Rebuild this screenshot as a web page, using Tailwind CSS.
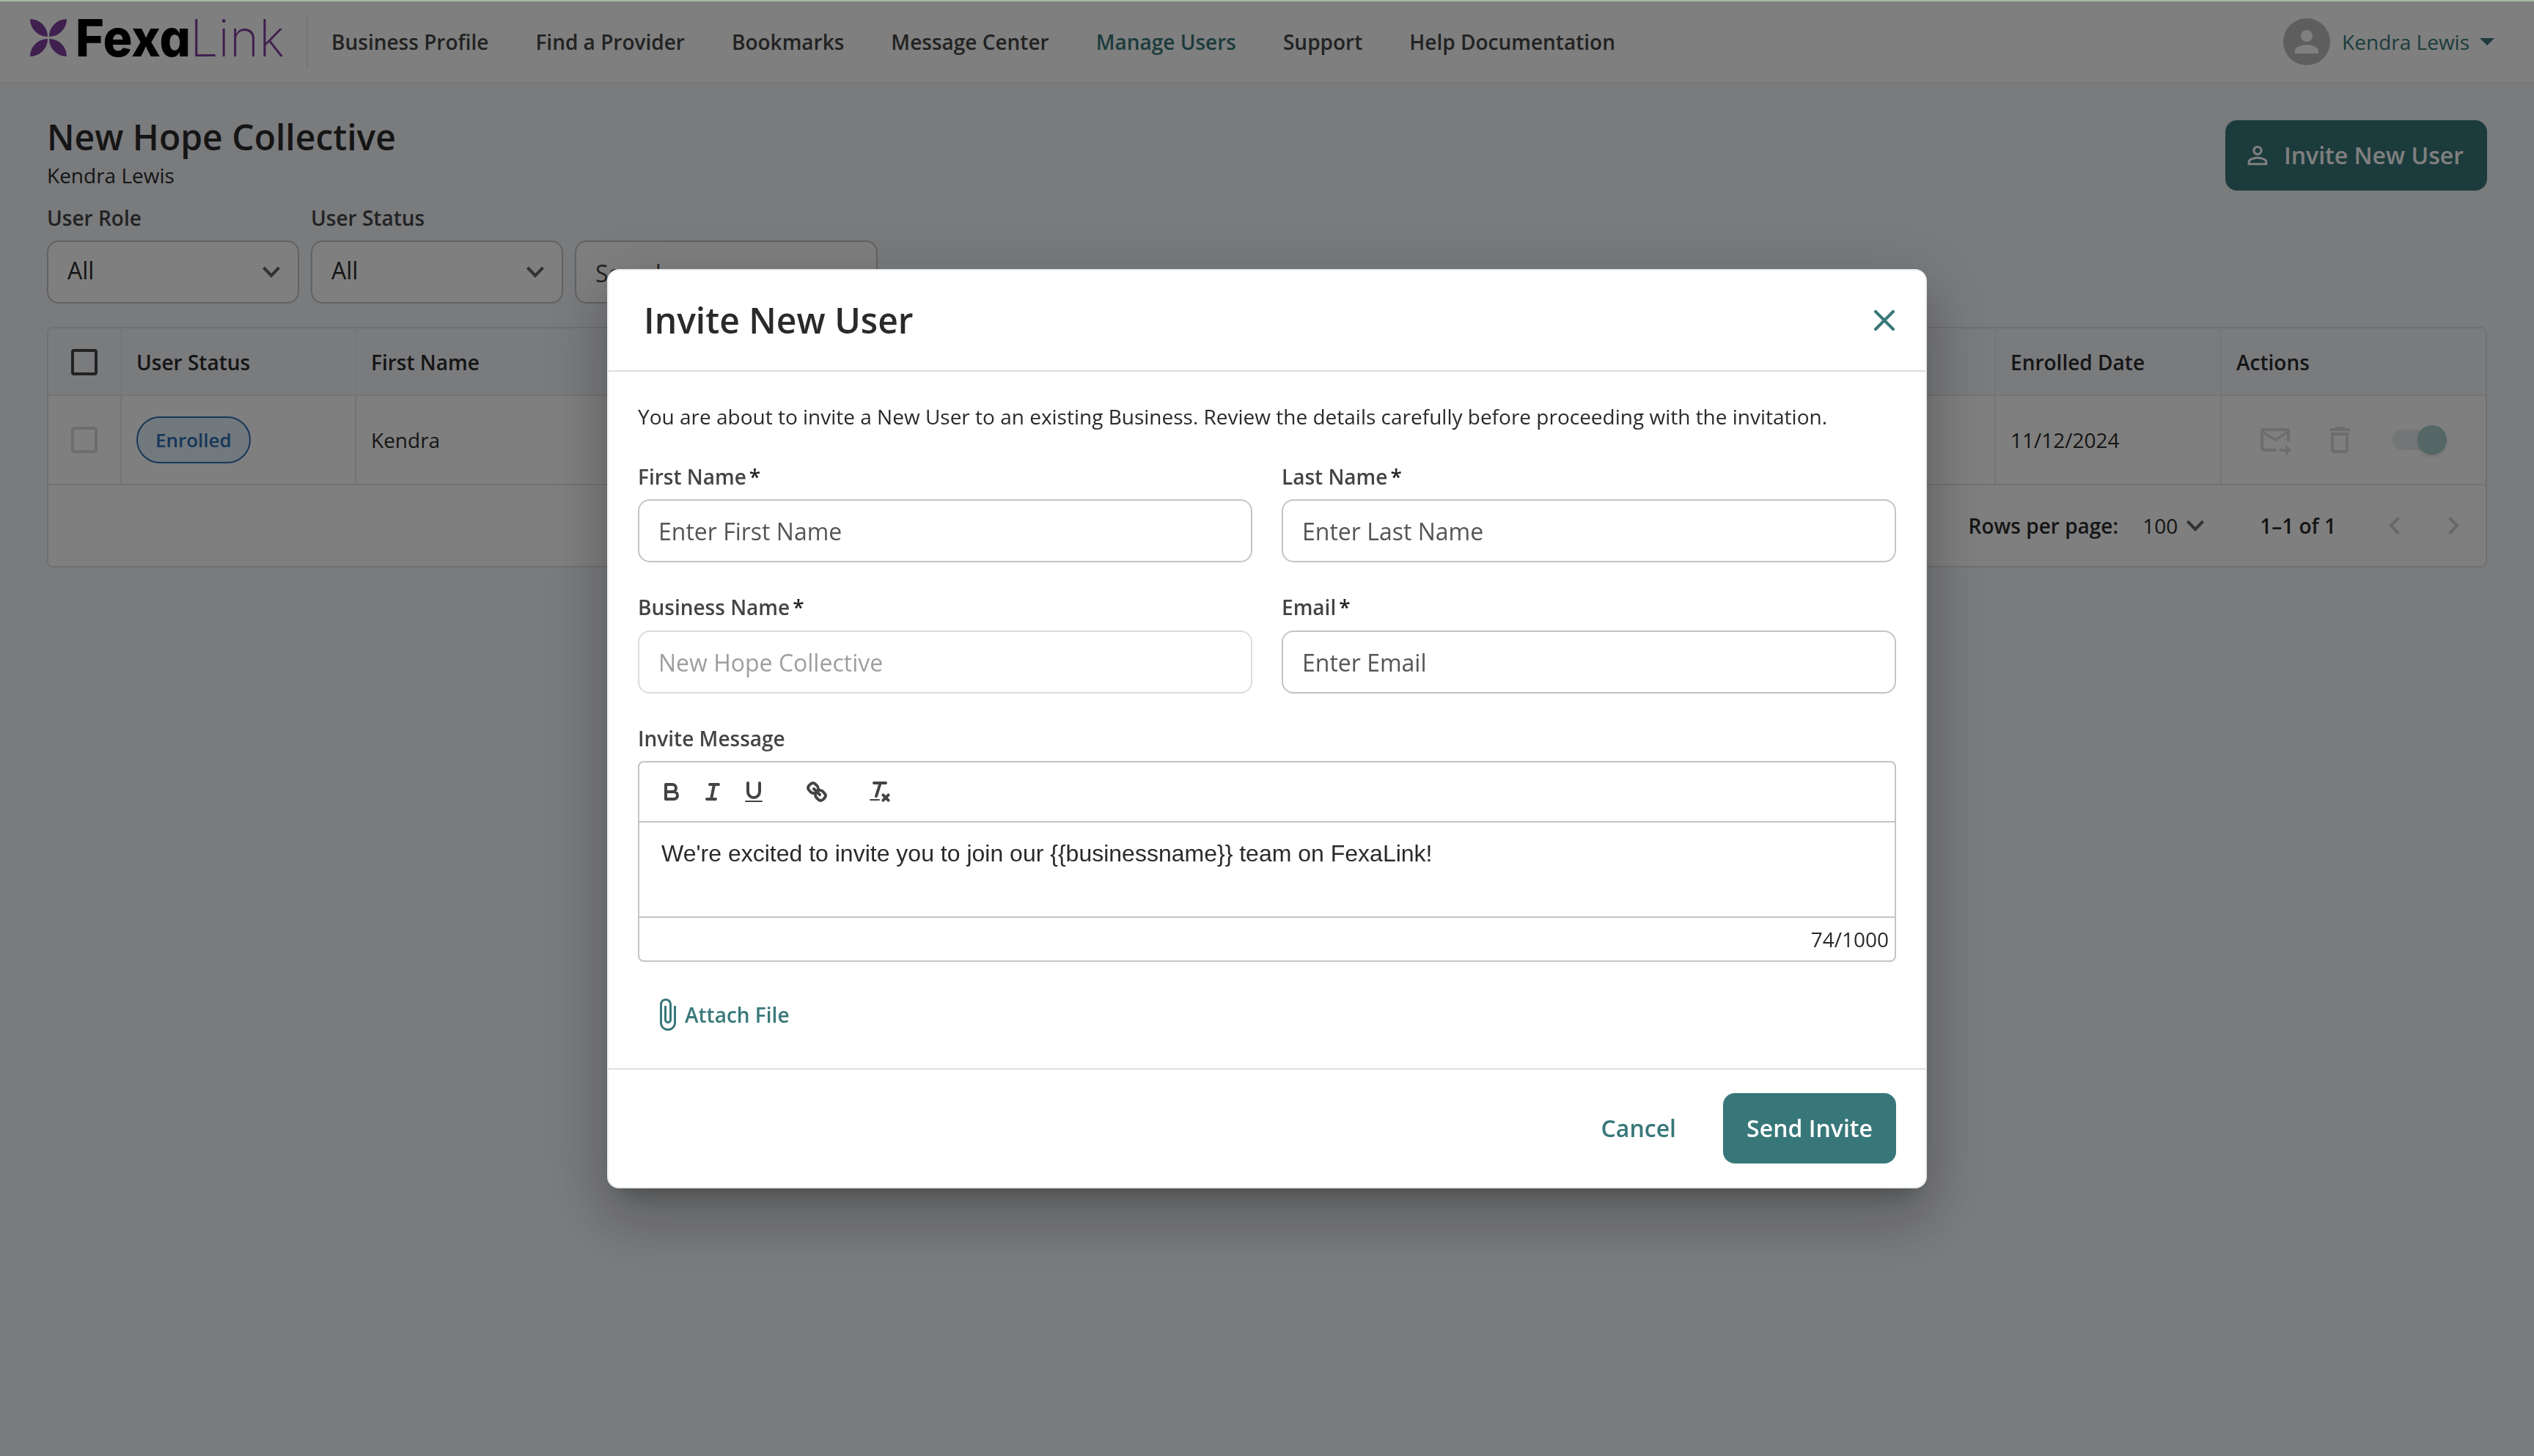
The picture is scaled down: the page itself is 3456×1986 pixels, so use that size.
<!DOCTYPE html>
<html lang="en">
  <head>
    <meta charset="UTF-8" />
    <meta name="viewport" content="width=device-width, initial-scale=1.0" />
    <title>FexaLink - Manage Users</title>
    <script src="https://cdn.jsdelivr.net/npm/@tailwindcss/browser@4"></script>
  </head>
  <body class="h-[1986px] overflow-hidden bg-[#f5f7fa] font-['Open_Sans',sans-serif] text-[28px] leading-[38px] text-[#2a2a2a]">
    <div class="h-0.5 bg-[#a5b9a5]"></div>

    <header class="flex h-28 items-center border-b-2 border-[#eceef1] bg-white pr-[54px] pl-10">
      <svg class="mb-2.5 h-20 w-[350px] overflow-visible" viewBox="0 0 350 80">
        <g fill="#80409f">
          <path d="M1 14A24 24 0 0 1 25 38A24 24 0 0 1 1 14Z" />
          <path d="M51 14A24 24 0 0 0 27 38A24 24 0 0 0 51 14Z" />
          <path d="M1 65A24 24 0 0 0 25 41A24 24 0 0 0 1 65Z" />
          <path d="M51 65A24 24 0 0 1 27 41A24 24 0 0 1 51 65Z" />
        </g>
        <text x="63" y="65" textLength="157" lengthAdjust="spacingAndGlyphs" font-family="Inter" font-size="70" font-weight="800" style="font-feature-settings: 'cv11'">Fexa</text>
        <text x="219" y="65" textLength="129" lengthAdjust="spacingAndGlyphs" font-family="Inter" font-size="70" font-weight="200" fill="#80409f">Link</text>
      </svg>
      <div class="mr-8 ml-[28px] h-[74px] w-0.5 bg-[#ececec]"></div>
      <nav class="flex gap-16 font-semibold text-[#444]">
        <a href="#">Business Profile</a>
        <a href="#">Find a Provider</a>
        <a href="#">Bookmarks</a>
        <a href="#">Message Center</a>
        <a href="#" class="text-[#387779]">Manage Users</a>
        <a href="#">Support</a>
        <a href="#">Help Documentation</a>
      </nav>
      <div class="ml-auto flex items-center text-[#387779]">
        <span class="flex size-16 items-center justify-center rounded-full bg-[#bdbdbd]">
          <svg class="size-12 fill-white" viewBox="0 0 24 24"><path d="M12 12c2.21 0 4-1.79 4-4s-1.79-4-4-4-4 1.79-4 4 1.79 4 4 4zm0 2c-2.67 0-8 1.34-8 4v2h16v-2c0-2.66-5.33-4-8-4z" /></svg>
        </span>
        <span class="ml-4">Kendra Lewis</span>
        <svg class="ml-3.5 h-2.5 w-5 fill-current" viewBox="0 0 20 10"><path d="M0 0h20L10 10z" /></svg>
      </div>
    </header>

    <main class="px-16 pt-10">
      <div class="flex items-start justify-between">
        <div>
          <h1 class="text-[48px] leading-[66px] font-semibold">New Hope Collective</h1>
          <p>Kendra Lewis</p>
        </div>
        <button class="mt-2.5 flex h-24 w-[357px] items-center justify-end gap-4 rounded-2xl bg-[#387779] pr-8 text-[32px] font-semibold text-white">
          <svg class="size-10 fill-current" viewBox="0 0 24 24"><path d="M12 5.9a2.1 2.1 0 110 4.2 2.1 2.1 0 010-4.2m0 9c2.97 0 6.1 1.46 6.1 2.1v1.1H5.9V17c0-.64 3.13-2.1 6.1-2.1M12 4C9.79 4 8 5.79 8 8s1.79 4 4 4 4-1.79 4-4-1.79-4-4-4zm0 9c-2.67 0-8 1.34-8 4v3h16v-3c0-2.66-5.33-4-8-4z" /></svg>
          Invite New User
        </button>
      </div>

      <div class="mt-[18px] flex items-end gap-4">
        <div>
          <label class="block font-semibold text-[#444]">User Role</label>
          <div class="mt-3 flex h-[86px] w-[344px] items-center justify-between rounded-2xl border-2 border-[#c4c4c4] bg-white pr-6 pl-[26px] text-[32px]">
            <span class="mb-1">All</span>
            <svg class="h-4 w-6 fill-none stroke-[#666]" viewBox="0 0 24 16" stroke-width="4"><path d="M1.500 2L12 13L22.500 2" /></svg>
          </div>
        </div>
        <div>
          <label class="block font-semibold text-[#444]">User Status</label>
          <div class="mt-3 flex h-[86px] w-[344px] items-center justify-between rounded-2xl border-2 border-[#c4c4c4] bg-white pr-6 pl-[26px] text-[32px]">
            <span class="mb-1">All</span>
            <svg class="h-4 w-6 fill-none stroke-[#666]" viewBox="0 0 24 16" stroke-width="4"><path d="M1.500 2L12 13L22.500 2" /></svg>
          </div>
        </div>
        <div class="flex h-[86px] w-[413px] items-center rounded-2xl border-2 border-[#c4c4c4] bg-white px-[26px] pt-1 text-[32px] text-[#444]">Search</div>
      </div>

      <section class="mt-8 h-[328px] overflow-hidden rounded-lg border-2 border-[#dfe1e4] bg-white">
        <div class="grid h-[92px] grid-cols-[100px_320px_2236px_308px_1fr] divide-x-2 divide-[#eceef1] border-b-2 border-[#e6e8eb] bg-[#f5f7fa] font-semibold *:flex *:items-center *:pt-0.5">
          <div class="justify-center"><span class="size-9 rounded border-4 border-[#444]"></span></div>
          <div class="pl-5">User Status</div>
          <div class="pl-5">First Name</div>
          <div class="pl-5">Enrolled Date</div>
          <div class="pl-5">Actions</div>
        </div>
        <div class="grid h-[122px] grid-cols-[100px_320px_2236px_308px_1fr] divide-x-2 divide-[#e6e8eb] border-b-2 border-[#e6e8eb] *:flex *:items-center">
          <div class="justify-center"><span class="size-9 rounded border-4 border-[#dadada]"></span></div>
          <div class="pl-5"><span class="flex h-16 items-center rounded-full border-2 border-[#2f6db5] bg-[#e3f2f9] px-6 text-[26px] font-semibold text-[#2f6db5]">Enrolled</span></div>
          <div class="pl-5">Kendra</div>
          <div class="pl-5">11/12/2024</div>
          <div class="pl-[49px]">
            <svg class="size-12 fill-[#dadada]" viewBox="0 0 24 24"><path d="M20 4H4c-1.100 0-2 .9-2 2v12c0 1.100.9 2 2 2h9v-2H4V8l8 5 8-5v5h2V6c0-1.100-.9-2-2-2zm-8 7L4 6h16l-8 5zm7 4l4 4-4 4v-3h-4v-2h4v-3z" /></svg>
            <svg class="ml-10 size-12 fill-[#dadada]" viewBox="0 0 24 24"><path d="M6 19c0 1.100.9 2 2 2h8c1.100 0 2-.9 2-2V7H6v12zM8 9h8v10H8V9zm7.500-5l-1-1h-5l-1 1H5v2h14V4z" /></svg>
            <span class="ml-12 flex h-7 w-[68px] items-center rounded-full bg-[#e6ecec]"><span class="ml-[34px] size-10 shrink-0 rounded-full bg-[#a9cccd] shadow-md"></span></span>
          </div>
        </div>
        <div class="flex h-[110px] items-center justify-end">
          <span class="font-semibold">Rows per page:</span>
          <span class="ml-[33px]">100</span>
          <svg class="ml-3 h-4 w-6 fill-none stroke-[#666]" viewBox="0 0 24 16" stroke-width="4"><path d="M1.500 2L12 13L22.500 2" /></svg>
          <span class="ml-[76px] font-semibold">1–1 of 1</span>
          <svg class="ml-[72px] h-6 w-4 fill-none stroke-[#d0d0d0]" viewBox="0 0 16 24" stroke-width="4"><path d="M13.500 1L3 12L13.500 23" /></svg>
          <svg class="mr-9 ml-16 h-6 w-4 fill-none stroke-[#d0d0d0]" viewBox="0 0 16 24" stroke-width="4"><path d="M2.500 1L13 12L2.500 23" /></svg>
        </div>
      </section>
    </main>

    <!-- Invite modal -->
    <div class="fixed inset-x-0 top-0.5 bottom-0 flex items-center justify-center bg-black/50">
      <div class="flex h-[1254px] w-[1800px] flex-col rounded-2xl border-2 border-[#e9ecef] bg-white shadow-[0_22px_30px_-14px_rgba(0,0,0,0.2),0_48px_76px_6px_rgba(0,0,0,0.14),0_18px_92px_16px_rgba(0,0,0,0.12)]">
        <div class="flex h-[138px] items-center justify-between border-b-2 border-[#dfdfdf] pr-[42px] pl-12">
          <h2 class="text-[48px] leading-[66px] font-semibold">Invite New User</h2>
          <svg class="size-7 stroke-[#387779]" viewBox="0 0 28 28" stroke-width="4" stroke-linecap="round"><path d="M2 2L26 26M26 2L2 26" /></svg>
        </div>
        <div class="flex-1 px-10 pt-[42px]">
          <p>You are about to invite a New User to an existing Business. Review the details carefully before proceeding with the invitation.</p>
          <div class="mt-11 grid grid-cols-2 gap-x-10 gap-y-[42px]">
            <div>
              <label class="block font-semibold text-[#444]">First Name<span class="ml-1 text-[#222]">*</span></label>
              <input class="mt-3 block h-[86px] w-full rounded-2xl border-2 border-[#c4c4c4] px-[26px] text-[32px] placeholder:text-[#555]" placeholder="Enter First Name" />
            </div>
            <div>
              <label class="block font-semibold text-[#444]">Last Name<span class="ml-1 text-[#222]">*</span></label>
              <input class="mt-3 block h-[86px] w-full rounded-2xl border-2 border-[#c4c4c4] px-[26px] text-[32px] placeholder:text-[#555]" placeholder="Enter Last Name" />
            </div>
            <div>
              <label class="block font-semibold text-[#444]">Business Name<span class="ml-1 text-[#222]">*</span></label>
              <input class="mt-[13px] block h-[86px] w-full rounded-2xl border-2 border-[#dcdcdc] px-[26px] text-[32px] text-[#9e9e9e]" value="New Hope Collective" disabled />
            </div>
            <div>
              <label class="block font-semibold text-[#444]">Email<span class="ml-1 text-[#222]">*</span></label>
              <input class="mt-[13px] block h-[86px] w-full rounded-2xl border-2 border-[#c4c4c4] px-[26px] text-[32px] placeholder:text-[#555]" placeholder="Enter Email" />
            </div>
          </div>
          <label class="mt-[42px] block font-semibold text-[#444]">Invite Message</label>
          <div class="mt-3 h-[274px] rounded-lg border-2 border-[#c4c4c4]">
            <div class="flex h-[82px] items-center border-b-2 border-[#c4c4c4] pl-[26px] text-[#444]">
              <svg class="size-9 fill-none stroke-current" viewBox="0 0 18 18" stroke-width="2" stroke-linejoin="round"><path d="M5,4H9.500A2.500,2.500,0,0,1,12,6.500v0A2.500,2.500,0,0,1,9.500,9H5V4ZM5,9h5.500A2.500,2.500,0,0,1,13,11.500v0A2.500,2.500,0,0,1,10.500,14H5V9Z" /></svg>
              <svg class="ml-5 size-9 stroke-current" viewBox="0 0 18 18" stroke-width="2" stroke-linecap="round"><path d="M7 4H13M5 14H11M8 14L10 4" /></svg>
              <svg class="ml-5 size-9 fill-none stroke-current" viewBox="0 0 18 18" stroke-width="2" stroke-linecap="round"><path d="M5,3V9a4.012,4.012,0,0,0,4,4H9a4.012,4.012,0,0,0,4-4V3" /><rect class="fill-current stroke-none" height="1" rx="0.5" width="12" x="3" y="15" /></svg>
              <svg class="ml-[50px] size-9 fill-none stroke-current" viewBox="0 0 18 18" stroke-width="2"><path stroke-linecap="round" d="M7 7L11 11" /><path d="M8.900,4.577a3.476,3.476,0,0,1,.36,4.679A3.476,3.476,0,0,1,4.577,8.900C3.185,7.500,2.035,6.400,4.217,4.217S7.500,3.185,8.900,4.577Z" /><path d="M13.423,9.100a3.476,3.476,0,0,0-4.679-.36,3.476,3.476,0,0,0,.36,4.679c1.392,1.392,2.500,2.542,4.679.36S14.815,10.500,13.423,9.100Z" /></svg>
              <svg class="ml-[50px] size-9 stroke-current" viewBox="0 0 18 18" stroke-width="2" stroke-linecap="round"><path d="M5 3H13M11.200 11.200L14.800 14.800M14.800 11.200L11.200 14.800" /><path d="M6.500 12L9.350 3" /><rect class="fill-current stroke-none" height="1" rx="0.5" width="7" x="2" y="14" /></svg>
            </div>
            <div class="h-[130px] border-b-2 border-[#c4c4c4] pt-[23px] pl-[30px] font-['Liberation_Sans',sans-serif] text-[32px]">We're excited to invite you to join our &#123;&#123;businessname&#125;&#125; team on FexaLink!</div>
            <div class="flex h-[58px] items-center justify-end pr-2">74/1000</div>
          </div>
          <button class="mt-12 ml-[30px] flex h-12 items-center gap-3 font-semibold text-[#387779]">
            <svg class="h-11 w-[22px] fill-current" viewBox="7 1 11 22"><path d="M16.500 6v11.500c0 2.210-1.790 4-4 4s-4-1.790-4-4V5c0-1.380 1.120-2.500 2.500-2.500s2.500 1.120 2.500 2.500v10.500c0 .55-.45 1-1 1s-1-.45-1-1V6H10v9.500c0 1.380 1.120 2.500 2.500 2.500s2.500-1.120 2.500-2.500V5c0-2.210-1.790-4-4-4S7 2.790 7 5v12.500c0 3.040 2.460 5.500 5.500 5.500s5.500-2.460 5.500-5.500V6h-1.500z" /></svg>
            Attach File
          </button>
        </div>
        <div class="flex h-[162px] items-center justify-end gap-16 border-t-2 border-[#dfdfdf] pr-10 text-[32px] font-semibold text-[#387779]">
          <button>Cancel</button>
          <button class="h-24 w-[236px] rounded-2xl bg-[#387779] text-white">Send Invite</button>
        </div>
      </div>
    </div>
  </body>
</html>
